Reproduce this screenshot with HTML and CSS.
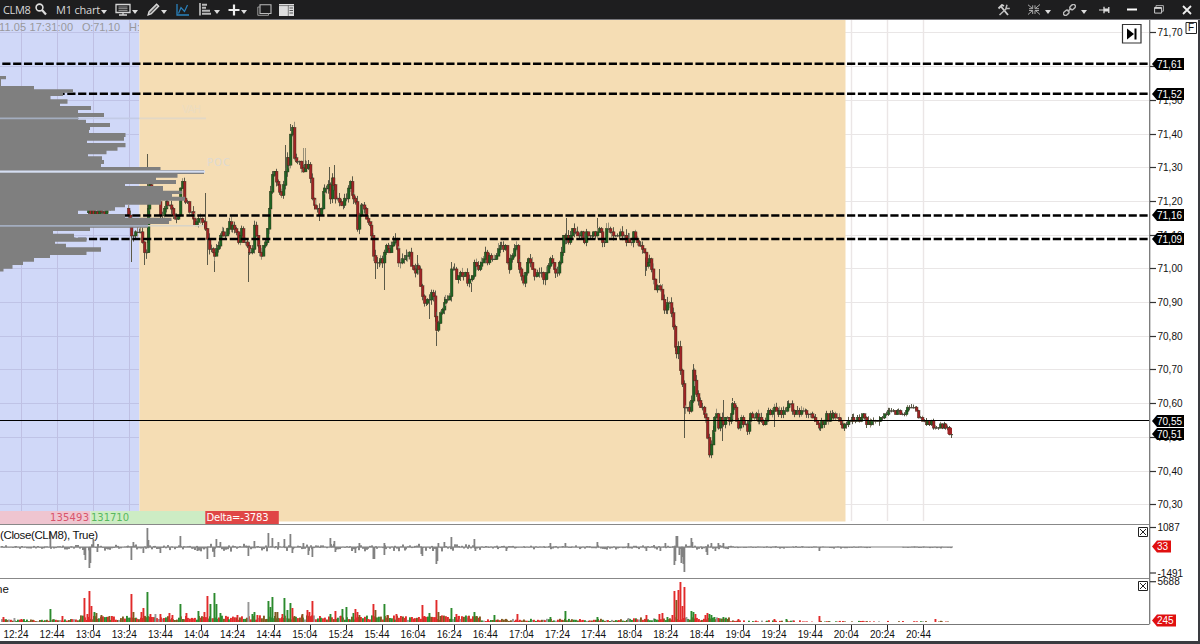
FILE: index.html
```html
<!DOCTYPE html>
<html>
<head>
	<meta charset="utf-8" />
<title>CLM8 - M1 chart</title>
<link rel="stylesheet" href="styles.css">
</head>
<body>
<div id="main">
	<div class="toolbar">
		<span class="symbol">CLM8</span>
		<svg class="search" width="12" height="13" viewBox="0 0 12 13"><circle cx="4.5" cy="4.5" r="3.4" fill="none" stroke="#ddd" stroke-width="1.6"/><path d="M7 7l4 4.5" stroke="#ddd" stroke-width="2.2"/></svg>
		<span class="period">M1 chart</span><i class="caret"></i>
		<svg class="monitor" width="16" height="13" viewBox="0 0 16 13"><path d="M1 1.5h14v8H1zM4 12h8M8 9v3" fill="none" stroke="#d5d5d5" stroke-width="1.3"/><path d="M3.5 4h9M3.5 5.7h9M3.5 7.4h9" stroke="#aaa" stroke-width=".9"/></svg><i class="caret"></i>
		<svg class="pencil" width="13" height="13" viewBox="0 0 13 13"><path d="M1 12l1-3.4L9.6 1l2.2 2.2-7.4 7.6z" fill="#999" stroke="#ddd" stroke-width="1.1"/><path d="M3 10L10 3" stroke="#444" stroke-width=".8"/></svg><i class="caret"></i>
		<svg class="lines" width="13" height="12" viewBox="0 0 13 12"><path d="M1 0v11h12" fill="none" stroke="#2a82bd" stroke-width="1.3"/><path d="M2.5 9.5l2.5-6 3.5 4L11.5 1" fill="none" stroke="#2a82bd" stroke-width="1.2"/></svg>
		<svg class="bars" width="14" height="13" viewBox="0 0 14 13"><path d="M1 0v12.5" stroke="#ddd" stroke-width="1.4"/><path d="M3 1.7h5M3 4.7h4M3 7.7h8M3 10.7h9" stroke="#bbb" stroke-width="2"/></svg><i class="caret"></i>
		<svg class="plus" width="12" height="12" viewBox="0 0 12 12"><path d="M6 .5v11M.5 6h11" stroke="#eee" stroke-width="2.2"/></svg><i class="caret"></i>
		<svg class="windows" width="15" height="12" viewBox="0 0 15 12"><path d="M3 .7h11v8.8H3z" fill="none" stroke="#bbb" stroke-width="1.1"/><path d="M3 3H.8v8.3h10.7V9.5" fill="none" stroke="#999"/></svg>
		<svg class="panel" width="15" height="12" viewBox="0 0 15 12"><path d="M0 0h15v12H0z" fill="#ddd"/><path d="M0 1.6h15M9.3 1v11" stroke="#666" stroke-width=".8"/><path d="M10.5 4h3.5M10.5 6.5h3.5M10.5 9h3.5" stroke="#555"/></svg>
		<span class="fill"></span>
		<svg class="tools" width="14" height="12" viewBox="0 0 14 12"><path d="M1.5 4.5L5 1l2 1M4 2.5l7 8.5" fill="none" stroke="#ccc" stroke-width="1.9"/><path d="M2.5 11L9.5 4.5M10 .8L9 4.3l3.8.2" fill="none" stroke="#bbb" stroke-width="1.5"/></svg>
		<svg class="collapse" width="12" height="11" viewBox="0 0 12 11"><path d="M0 .8l4.5 3.7M4.7 1.3v3.4H1M12 .5L7.5 4.3M7 1.3v3.4h4M0 10.5l4.5-4M4.7 10V6.5H1M12 10.5l-4.5-4M7 10V6.5h4" fill="none" stroke="#aaa" stroke-width="1"/></svg><i class="caret"></i>
		<svg class="link" width="13" height="12" viewBox="0 0 13 12"><g fill="none" stroke="#bbb" stroke-width="1.4" transform="rotate(-42 6.5 6)"><rect x="-.8" y="3.9" width="6" height="4" rx="2"/><rect x="7.8" y="3.9" width="6" height="4" rx="2"/><path d="M4 5.9h5"/></g></svg><i class="caret"></i>
		<svg class="pin" width="11" height="8" viewBox="0 0 11 8"><path d="M0 4h5" stroke="#ddd"/><path d="M5 .8v6.4M9.8 1v6" stroke="#ddd" stroke-width="1.3"/><path d="M5 2.5h5v3H5z" fill="#ddd"/></svg>
		<svg class="minimize" width="10" height="3" viewBox="0 0 10 3"><path d="M0 1.5h10" stroke="#fff" stroke-width="2"/></svg>
		<svg class="restore" width="10" height="9" viewBox="0 0 10 9"><path d="M2 2V.6h7.4v5.6H8" fill="none" stroke="#aaa"/><path d="M.6 2.6h7v5.5h-7z" fill="none" stroke="#ccc"/><path d="M.5 3h7" stroke="#ddd" stroke-width="1.6"/></svg>
		<svg class="close" width="10" height="10" viewBox="0 0 10 10"><path d="M1 1l8 8M9 1L1 9" stroke="#eee" stroke-width="1.8"/></svg>
	</div>
	<div class="panels">
		<svg id="price" class="plot" viewBox="0 20 1149 504" width="1149" height="504"></svg>
		<svg id="price_scale" class="scale" viewBox="1149 20 49 504" width="49" height="504"></svg>
		<svg id="delta" class="plot" viewBox="0 524 1149 54" width="1149" height="54"></svg>
		<svg id="delta_scale" class="scale" viewBox="1149 524 49 54" width="49" height="54"></svg>
		<svg id="volume" class="plot" viewBox="0 578 1149 46" width="1149" height="46"></svg>
		<svg id="volume_scale" class="scale" viewBox="1149 578 49 46" width="49" height="46"></svg>
		<svg id="time" class="time" viewBox="0 624 1198 17" width="1198" height="17"></svg>
	</div>
</div>
<script src="chart.js"></script>
</body>
</html>
```
FILE: styles.css
```css
	html, body{
		padding:0;
		margin:0;
	}
body {
	background:#3a3b40;
	overflow:hidden;
}
#main {
	width:1200px;
	height:644px;
	font-family: "Liberation Sans", Arial, sans-serif;
}
.toolbar {
	display:flex;
	align-items:center;
	height:20px;
	box-sizing:border-box;
	padding:0 8px 0 3px;
	background:#1e1e1f;
	border-bottom:1px solid #77777c;
	color:#d8d8d8;
	font: 11px "Open Sans", sans-serif;
	white-space:nowrap;
}
.toolbar svg, .toolbar span {
	flex:none;
}
.toolbar .fill {
	flex:1;
}
.symbol {
	width:28px;
	letter-spacing:-.35px;
}
.period {
	width:44px;
	margin-left:9px;
	letter-spacing:-.2px;
}
.caret {
	flex:none;
	margin:4px 0 0 1px;
	border:3px solid transparent;
	border-top:4px solid #ddd;
	border-bottom:0;
}
.search { margin-left:4px; }
.monitor { margin-left:8px; }
.pencil { margin-left:9px; }
.lines { margin-left:9px; }
.bars { margin-left:10px; }
.plus { margin-left:8px; }
.windows { margin-left:10px; }
.panel { margin-left:7px; }
.collapse { margin-left:17px; }
.collapse + .caret, .link + .caret { margin-left:5px; }
.link { margin-left:12px; }
.pin { margin-left:12px; }
.minimize { margin-left:17px; }
.restore { margin-left:17px; }
.close { margin-left:18px; }

.panels {
	display:grid;
	grid-template-columns:1149px 49px;
	grid-template-rows:504px 54px 46px 17px;
	width:1198px;
	background:#fff;
}
.panels svg {
	display:block;
}
.scale {
	overflow:visible;
}
.time {
	grid-column:1 / 3;
}
text {
	font-size:10px;
	fill:#111;
}
.wide {
	font-family:"DejaVu Sans", sans-serif;
}
.info {
	font-size:11px;
	fill:#98989c;
}
.title {
	font-size:11.5px;
}
.area { fill:#7f7f7f; }
.white { fill:#fff; }
.sell { fill:#d8546c; }
.buy { fill:#58b860; }
.hint { fill:#dedad2; }
.faint { fill:#ecdcc0; }
```
FILE: chart.js
```js
var out = {};
var UP = "#1f6424", DOWN = "#a02426", WICK = "#5c5a48";
var STEP = 1.805;
var TICK = 3.37;

function put(id, html) {
	out[id] = (out[id] || "") + html;
}
function rect(id, x, y, w, h, fill, extra) {
	put(id, '<rect x="' + x + '" y="' + y + '" width="' + w + '" height="' + h + '" fill="' + fill + '" ' + (extra || "") + '/>');
}
function line(id, x1, y1, x2, y2, stroke, w, extra) {
	put(id, '<path d="M' + x1 + ' ' + y1 + 'L' + x2 + ' ' + y2 + '" stroke="' + stroke + '" stroke-width="' + (w || 1) + '" ' + (extra || "") + '/>');
}
function text(id, x, y, str, cls, len) {
	put(id, '<text x="' + x + '" y="' + y + '" class="' + (cls || "") + '"' + (len ? ' textLength="' + len + '"' : '') + '>' + str + '</text>');
}
function priceY(p) {
	return 33 + (71.7 - p) * 337;
}
var seed = 71;
function rnd() {
	seed = (seed * 16807) % 2147483647;
	return seed / 2147483647;
}

// ---- sessions and grid
rect("price", 0, 20, 1149, 504, "#fff");
rect("price", 0, 20, 139.5, 491, "#d0d8f8");
for (var i = 0; i < 15; i++) {
	var gy = Math.floor(32.9 + i * 33.7) + .5;
	line("price", 0, gy, 139, gy, "#bfc3e6");
	line("price", 845, gy, 1149, gy, "#e9e6e6");
}
for (var i = 0; i < 26; i++) {
	var gx = 21.3 + i * 36.1;
	if (gx < 139) line("price", Math.floor(gx) + .5, 20, Math.floor(gx) + .5, 511, "#bfc0e3");
	if (gx > 845) line("price", Math.floor(gx) + .5, 20, Math.floor(gx) + .5, 521, "#ebe6e6", 1.4);
}
rect("price", 139.5, 20, 706, 501.5, "#f5ddb4");
put("price", '<clipPath id="blue"><path d="M0 20h139v20H0z"/></clipPath><g clip-path="url(#blue)">');
text("price", -1, 31, "11.05 17:31:00", "info", 74);
text("price", 82, 31, "O:71,10", "info", 38);
text("price", 129, 31, "H:", "info");
put("price", '</g>');

// ---- candles: x, close
var path = [88,212, 92,209, 98,214, 105,209, 110,208, 127,206, 130,224, 132,244, 134,238, 137,229, 140,229, 143,246, 145,252,
	147,243, 148,187, 152,186, 157,192, 161,217, 165,200, 170,203, 175,216, 178,222, 181,174, 184,195, 190,210, 195,222,
	200,220, 204,217, 207,240, 210,252, 214,251, 218,240, 221,232, 224,238, 228,225, 234,226, 238,241, 241,232, 245,244,
	248,252, 252,248, 254,222, 257,240, 260,258, 263,246, 266,236, 268,208, 271,188, 273,169, 276,182, 279,191, 281,190,
	284,177, 286,160, 289,162, 290,131, 292,133, 293,154, 297,162, 302,168, 306,163, 308,165, 310,182, 313,207, 317,210,
	320,211, 322,200, 325,183, 328,187, 330,195, 332,176, 335,198, 338,202, 341,207, 344,200, 347,189, 349,181, 352,192,
	355,202, 357,226, 359,212, 362,201, 365,210, 367,222, 372,234, 374,267, 378,261, 383,266, 385,246, 390,251, 393,240,
	396,246, 399,261, 405,256, 408,251, 412,264, 415,273, 418,263, 420,285, 424,300, 428,303, 431,297, 434,303, 436,332,
	438,322, 440,312, 444,300, 446,291, 450,300, 451,267, 454,270, 457,280, 460,273, 465,277, 468,281, 471,283, 474,264,
	478,266, 481,271, 484,252, 488,262, 492,259, 496,251, 501,248, 505,247, 508,268, 511,255, 516,249, 519,268, 523,278,
	526,268, 529,256, 533,274, 538,275, 542,274, 545,281, 547,265, 551,257, 553,272, 557,269, 560,255, 562,240, 566,235,
	569,240, 572,228, 576,236, 580,230, 584,242, 588,232, 592,236, 597,228, 600,232, 603,240, 607,230, 612,238, 616,234,
	620,236, 623,232, 627,244, 630,241, 634,235, 638,246, 642,244, 646,262, 650,262, 653,280, 656,290, 659,283, 662,300,
	664,310, 668,303, 671,310, 673,325, 676,359, 678,347, 680,368, 682,386, 684,407, 687,404, 690,413, 692,372, 694,375,
	696,393, 699,400, 702,411, 706,415, 707,438, 709,452, 711,448, 713,430, 715,408, 718,425, 720,411, 723,424, 726,415,
	730,419, 732,401, 736,420, 738,427, 742,419, 747,427, 750,412, 757,416, 763,422, 767,413, 772,410, 777,413, 782,411,
	787,405, 792,409, 798,413, 803,410, 810,412, 815,417, 819,427, 823,420, 829,415, 836,416, 841,423, 845,424, 851,419,
	858,418, 863,418, 867,423, 874,420, 878,423, 883,413, 888,412, 905,412, 908,408, 915,407, 918,414, 923,422, 930,423,
	936,428, 940,424, 945,427, 949,434, 951,434];
var wicks = [131,262,0, 144,265,0, 147,154,0, 205,193,0, 207,265,0, 214,272,0, 248,282,0, 285,145,0, 290,124,0, 303,148,1, 305,148,1,
	319,221,0, 329,167,0, 334,165,0, 375,279,0, 384,290,0, 393,236,0, 417,255,0, 429,319,0, 436,346,0, 451,262,0, 471,292,0,
	566,218,0, 597,218,0, 645,276,0, 659,269,0, 684,438,0, 709,455,0, 722,441,0, 723,400,0, 732,398,0, 774,427,0, 787,401,0,
	820,431,0, 911,404,0, 951,438,0];
function at(x) {
	for (var i = 0; i < path.length - 2; i += 2) {
		if (x <= path[i + 2]) {
			var k = (x - path[i]) / (path[i + 2] - path[i]);
			return path[i + 1] + (path[i + 3] - path[i + 1]) * Math.max(0, k);
		}
	}
	return path[path.length - 1];
}
function snap(y) {
	return 33 + Math.round((y - 33) / TICK) * TICK;
}
for (var i = 0; i < wicks.length; i += 3) {
	line("price", wicks[i] + .5, at(wicks[i]), wicks[i] + .5, wicks[i + 1], wicks[i + 2] ? "#999078" : WICK);
}
var open = at(88);
for (var x = 88; x < 952; x += STEP) {
	if (x > 110 && x < 127) continue;
	var calm = x > 880 ? .45 : x > 735 ? .75 : 1;
	var last = snap(at(x) + (rnd() - .5) * 9 * calm);
	var hi = Math.min(open, last), h = Math.max(Math.abs(open - last), 1);
	var px = Math.round(x);
	var up = rnd() * 6 * calm, dn = rnd() * 6 * calm;
	line("price", px + .5, (hi - up).toFixed(1), px + .5, (hi + h + dn).toFixed(1), rnd() > .75 ? "#978f78" : WICK);
	if (h > 1) {
		rect("price", px - .7, hi.toFixed(1), 2.7, (h + .8).toFixed(1), last < open ? UP : DOWN, 'stroke="#33301c" stroke-width=".4"');
	} else {
		rect("price", px - .5, hi.toFixed(1), 2.4, 1.2, "#4a4638");
	}
	open = last;
}
rect("price", 947.5, 428, 4.5, 6, DOWN);

// ---- levels
[63.8, 93.8, 215.6, 239].forEach(function (y) {
	line("price", 2.3, y, 1149, y, "#000", 2.5, 'stroke-dasharray="8.2 2.63"');
});
line("price", 0, 420.5, 1149, 420.5, "#000");

// ---- volume profile: bottom edge, width
var rows = [79.3,6, 86,1, 89.3,34, 92.7,73, 96,63, 99.3,50.5, 103.7,67.5, 106,60, 110,91, 113,78, 117,104, 119.7,78, 123,86, 127,110,
	130,90, 133,89, 137,125.5, 140.7,124, 143,87, 147.3,125.5, 150.7,117.5, 154.3,106.5, 156.3,88, 160,102, 164,104, 167,101,
	170,160.5, 174,204, 177.7,177.5, 180,156, 184,176, 186,125, 190.7,163, 194,182, 196.7,172, 200.7,185, 204.7,161, 207.3,125,
	210.7,115, 214,78, 217.7,125, 221,171.5, 224,169, 227.7,148, 231,90, 233.7,53, 237.7,74, 241.7,86.5, 243.7,55, 247.3,66,
	251.7,101, 255,86.5, 258,50, 261.7,34, 265,23, 268.7,12.5, 271.5,3.5];
var d = "M0 76";
for (var i = 0, y = 76; i < rows.length; i += 2) {
	d += "L" + rows[i + 1] + " " + y + "V" + rows[i];
	y = rows[i];
}
put("price", '<path class="area" d="' + d + 'H0z"/>');
rect("price", 0, 170.5, 205, 2.2, "#d5def2");
line("price", 0, 118.3, 79, 118.3, "#a3adbf", 1.8);
line("price", 79, 118.3, 139, 118.3, "#c3cbe6", 1.8);
line("price", 139, 118.3, 206, 118.3, "#e2d8c5", 1.8);
line("price", 0, 225.8, 148, 225.8, "#a3adbf", 1.8);
line("price", 148, 225.8, 204, 225.8, "#d8d4c8", 1.6);
text("price", 182, 113, "VAH", "wide faint", 19);
text("price", 207, 166, "POC", "wide hint", 23);

rect("price", 0, 511, 90.5, 13, "#efc5d0");
rect("price", 90.5, 511, 115, 13, "#cdecc4");
rect("price", 205.3, 511, 73.5, 13, "#e04646");
text("price", 50, 521, "135493", "wide sell", 39);
text("price", 91, 521, "131710", "wide buy", 38);
text("price", 206.5, 521, "Delta=-3783", "wide white", 62);

// go to last bar
put("price", '<path d="M1122.5 24.5h18.5v18.5h-18.5z" fill="#fff" stroke="#333" stroke-width="1.2"/><path d="M1127 28.5v11l7-5.5zM1134.5 28.5h2v11h-2z"/>');

// ---- delta
line("delta", 0, 524.5, 1149, 524.5, "#888");
line("delta", 0, 547, 953, 547, "#808080", 1.2);
var deltas = [50,-15, 84,8, 85,13, 89,21, 90,16, 93,-8, 97,5, 131,13, 133,-5, 143,6, 147,-19, 148,-7, 160,6, 180,-11, 197,4, 207,12,
	214,10, 216,-8, 220,-5, 248,9, 254,-6, 268,-14, 272,-9, 278,-5, 284,-8, 290,-13, 292,6, 303,-4, 308,8, 312,10, 330,-9, 334,-6,
	335,5, 355,6, 359,-4, 373,12, 374,12, 384,-4, 384,8, 422,9, 421,7, 436,17, 437,14, 438,-4, 444,-5, 451,-10, 474,-8, 475,4,
	506,4, 550,-4, 565,-4, 597,-5, 628,-4, 646,4, 660,4, 665,-4, 674,18, 675,14, 676,-11, 677,-11, 679,8, 681,16, 682,10, 684,25, 683,17, 691,-9,
	692,-5, 706,5, 707,8, 711,-4, 718,-4, 723,-4, 715,4, 819,4];
for (var x = 1; x < 952; x += STEP) {
	var amp = x < 80 ? 3.5 : x < 320 ? 6 : x < 480 ? 5.5 : x < 630 ? 3 : x < 735 ? 4.5 : 1.6;
	if (x > 870 && x < 900) continue;
	var v = (rnd() - .45) * amp * (rnd() > .6 ? 1.3 : .7);
	rect("delta", Math.round(x), (547 + Math.min(v, 0)).toFixed(1), 2, (Math.abs(v) + .5).toFixed(1), "#858585");
}
for (var i = 0; i < deltas.length; i += 2) {
	rect("delta", deltas[i] - .5, 547 + Math.min(deltas[i + 1], 0), 1.8, Math.abs(deltas[i + 1]), "#818181");
}
text("delta", 0, 538.5, "(Close(CLM8), True)", "title", 98);

// ---- volume
line("volume", 0, 578.5, 1149, 578.5, "#888");
var RED = "#e12a2a", GREEN = "#2b8a2d", MIX = "#80581f", GRAY = "#969696";
var kinds = { r: RED, g: GREEN, m: MIX, n: GRAY };
var volumes = "3r5 14n4 21r3 50g13 62r6 84r24 87r8 89r31 91r16 94g10 96m9 101m7 109m6 131r28 133m10 141r10 143r14 147g30 150r8 155n8 160r8 169r9 172r7 " +
	"180g18 186r9 198g11 204r10 207r26 210g18 214g29 216g18 220g9 237r7 248n20 252g8 254g10 257r7 268g21 270g15 272g25 275m10 277m10 " +
	"282r8 284g24 287g12 290g19 292r14 294m6 302m8 307r12 309r10 312r21 330g8 335r11 342g13 346g15 353g9 355r13 357r10 359m7 373r18 375m12 " +
	"384g18 387m7 396r8 422r17 424r6 429g9 436r22 438m10 440m6 451g14 456r8 458r6 468r6 474g10 476m6 494g7 517r8 550g5 565g11 597g5 628n4 " +
	"646r7 659r8 662r9 667g5 672r7 674r31 676m22 678r32 680r40 682r16 684r35 686n5 691g11 693g10 695r8 705r7 707r9 709g8 711g7 714g5 718r4 723g5 " +
	"738r3 774r3 786g3 819r6 935r3";
for (var x = 1; x < 952; x += STEP) {
	var base = x < 80 ? 2.5 : x < 480 ? 5.6 : x < 630 ? 2.7 : x < 730 ? 4 : x < 800 ? 1.5 : 1;
	if (x > 740 && rnd() > (x > 830 ? .4 : .7)) continue;
	var vh = base * (.35 + rnd() * .85), c = rnd();
	rect("volume", Math.round(x), (622 - vh).toFixed(1), 1.9, vh.toFixed(1), c < .42 ? RED : c < .67 ? MIX : c < .92 ? GREEN : GRAY);
}
volumes.split(" ").forEach(function (s) {
	var m = s.match(/(\d+)(\w)(\d+)/), vh = +m[3];
	rect("volume", m[1] - .5, 622 - vh, 1.9, vh, kinds[m[2]]);
});
text("volume", -4, 592.5, "ne", "title");

// close boxes of the lower panels
[["delta", 527.5], ["volume", 581.5]].forEach(function (b) {
	put(b[0], '<path d="M1138.5 ' + b[1] + 'h9v9h-9zM1140 ' + (b[1] + 1.5) + 'l6 6m0-6l-6 6" fill="none" stroke="#222"/>');
});

// ---- scales
[["price_scale", 20, 524], ["delta_scale", 524, 578], ["volume_scale", 578, 624]].forEach(function (s) {
	line(s[0], 1149.7, s[1], 1149.7, s[2], "#777", 1.3);
});
function mark(id, y, str) {
	line(id, 1150, y, 1156, y, "#333", 1.2);
	text(id, 1157.5, y + 3.7, str);
}
function tag(id, y, str, fill, w) {
	put(id, '<path d="M1152 ' + y + 'l5 -6H' + (1152 + w) + 'v12H1157z" fill="' + fill + '"/>');
	text(id, 1157, y + 3.7, str, "white");
}
for (var i = 0; i < 15; i++) {
	mark("price_scale", Math.floor(32.9 + i * 33.7) + .5, (71.7 - i / 10).toFixed(2).replace(".", ","));
}
[71.61, 71.52, 71.16, 71.09, 70.55, 70.51].forEach(function (p) {
	tag("price_scale", Math.round(priceY(p) + .3), p.toFixed(2).replace(".", ","), "#000", 32);
});
put("price_scale", '<path d="M1186 22.5h10.5v11H1186z" fill="#fff" stroke="#222"/>');
text("price_scale", 1188, 31, "F");
mark("delta_scale", 527.5, "1087");
mark("delta_scale", 573, "-1491");
tag("delta_scale", 546.5, "33", "#e01010", 19);
mark("volume_scale", 581.7, "5688");
tag("volume_scale", 620.5, "245", "#e01010", 24);

// ---- time axis
line("time", 0, 624.5, 1149.5, 624.5, "#777");
for (var i = 0; i < 26; i++) {
	var t = 12 * 60 + 24 + i * 20, tx = 21.3 + i * 36.1;
	line("time", Math.floor(tx) + .5, 625, Math.floor(tx) + .5, 630, "#222");
	text("time", (tx - 17.8).toFixed(1), 638, Math.floor(t / 60) + ":" + ("0" + t % 60).slice(-2));
}

for (var id in out) {
	document.getElementById(id).innerHTML = out[id];
}
```
